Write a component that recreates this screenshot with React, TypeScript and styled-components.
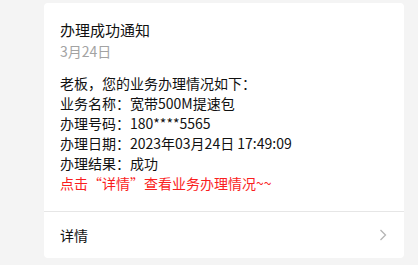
import React from "react";
import styled, { createGlobalStyle } from "styled-components";

const GlobalStyle = createGlobalStyle`
  html, body {
    margin: 0;
    padding: 0;
    background: #f4f4f4;
    font-family: "Microsoft YaHei", "Noto Sans CJK SC", "Noto Sans", sans-serif;
  }
`;

const Page = styled.div`
  padding: 3px 0 0 44px;
  width: 418px;
  height: 265px;
  box-sizing: border-box;
`;

const Card = styled.div`
  width: 360px;
  background: #ffffff;
  border-radius: 4px;
  overflow: hidden;
`;

const Content = styled.div`
  padding: 17px 16px 18px 16px;
`;

const Title = styled.div`
  font-size: 15px;
  line-height: 20px;
  color: #111111;
`;

const DateText = styled.div`
  margin-top: 1px;
  font-size: 14px;
  line-height: 20px;
  color: #a3a3a3;
`;

const Body = styled.div`
  margin-top: 12px;
`;

const Line = styled.div<{ $red?: boolean }>`
  font-size: 14px;
  line-height: 20px;
  color: ${(p) => (p.$red ? "#fa1e1e" : "#111111")};
  white-space: nowrap;
`;

const DetailRow = styled.div`
  height: 47px;
  border-top: 1px solid #e6e6e6;
  display: flex;
  align-items: center;
  justify-content: space-between;
  padding: 0 17px 0 16px;
  box-sizing: border-box;
  font-size: 14px;
  color: #111111;
`;

const Chevron = styled.svg`
  width: 8px;
  height: 12px;
  margin-top: -1px;
`;

const lines = [
  "老板，您的业务办理情况如下：",
  "业务名称：宽带500M提速包",
  "办理号码：180****5565",
  "办理日期：2023年03月24日 17:49:09",
  "办理结果：成功",
];

function App() {
  return (
    <Page>
      <GlobalStyle />
      <Card>
        <Content>
          <Title>办理成功通知</Title>
          <DateText>3月24日</DateText>
          <Body>
            {lines.map((l, i) => (
              <Line key={i}>{l}</Line>
            ))}
            <Line $red>点击“详情”查看业务办理情况~~</Line>
          </Body>
        </Content>
        <DetailRow>
          <span>详情</span>
          <Chevron viewBox="0 0 8 12">
            <path d="M1.5 1 L6.5 6 L1.5 11" fill="none" stroke="#b5b5b5" strokeWidth="1.3" />
          </Chevron>
        </DetailRow>
      </Card>
    </Page>
  );
}

export default App;
